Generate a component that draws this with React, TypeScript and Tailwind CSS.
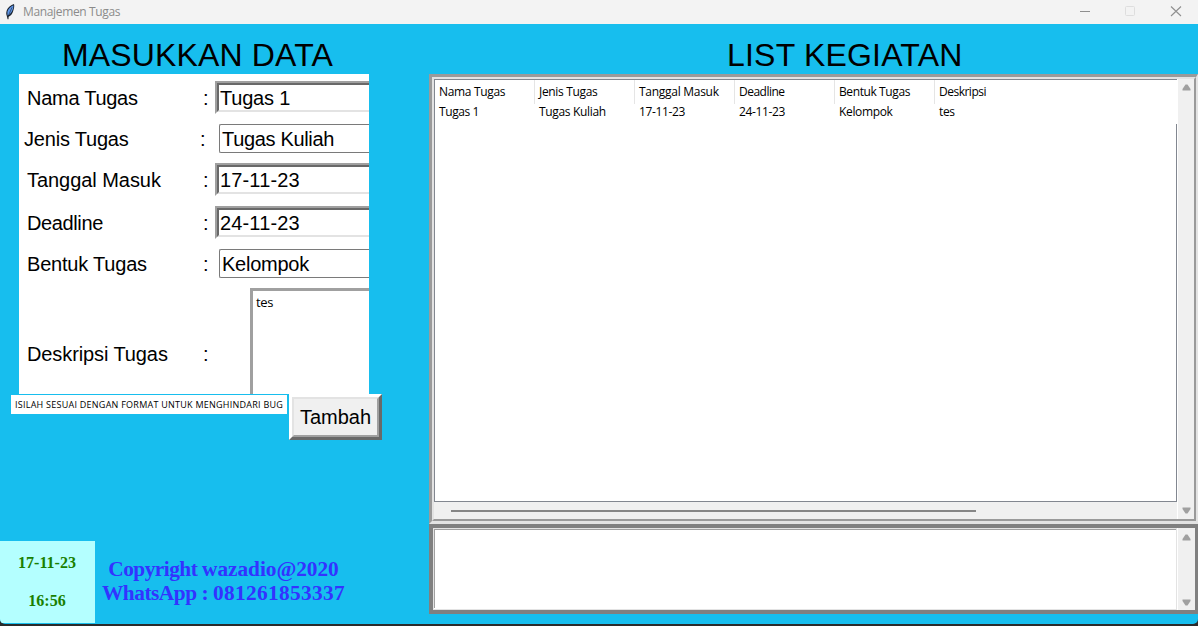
import type { ReactNode } from "react";

const columns = [
  { title: "Nama Tugas", value: "Tugas 1", titleCls: "tracking-[-0.33px]", valueCls: "tracking-[-0.4px]" },
  { title: "Jenis Tugas", value: "Tugas Kuliah", titleCls: "tracking-[-0.33px]", valueCls: "tracking-[-0.33px]" },
  { title: "Tanggal Masuk", value: "17-11-23", titleCls: "tracking-[-0.28px]", valueCls: "tracking-[-0.35px]" },
  { title: "Deadline", value: "24-11-23", titleCls: "tracking-[-0.5px]", valueCls: "tracking-[-0.35px]" },
  { title: "Bentuk Tugas", value: "Kelompok", titleCls: "tracking-[-0.4px]", valueCls: "tracking-[-0.35px]" },
  { title: "Deskripsi", value: "tes", titleCls: "tracking-[-0.5px]", valueCls: "tracking-[-0.35px]" },
];

function TitleBar() {
  return (
    <header className="flex h-6 shrink-0 items-center bg-[#f3f3f3]">
      <svg className="ml-[4px] h-4 w-[13px]" viewBox="0 0 13 16">
        <path d="M10 0 C7 0.8 3.6 3.6 2.6 7 C2 9 2.2 10.5 2.8 12 L3.6 15.3 L4.5 15.3 L4.6 12.8 C7 11.8 8.6 9.4 9.2 7 C10 4.8 10.6 2 10 0Z" fill="#1b2430" />
        <path d="M9.3 1.2 C6.4 2.4 4.1 5 3.4 7.8 L3.5 11.4 C6.6 10.4 7.8 7.8 8.5 6 C9.2 4.4 9.5 3 9.3 1.2Z" fill="#5f97ea" />
        <path d="M8 3.4 L4 12.5" stroke="#1b2430" strokeWidth="0.6" />
      </svg>
      <span className="ml-[6px] flex-1 text-[12px] leading-4 tracking-[-0.35px] text-[#8b8b8b]">Manajemen Tugas</span>
      <svg className="h-6 w-[120px]" viewBox="0 0 120 24" fill="none">
        <path d="M2 11.5H12" stroke="#8f8f8f" />
        <rect x="47.5" y="6.5" width="9" height="9" rx="1" stroke="#dedede" />
        <path d="M93 6.5L103 16M103 6.5L93 16" stroke="#8f8f8f" strokeWidth="1.1" />
      </svg>
    </header>
  );
}

interface FieldProps {
  label: string;
  height: string;
  labelCls: string;
  indent?: string;
  colon?: string;
  children: ReactNode;
}

function Field({ label, height, labelCls, indent = "pl-2", colon = "w-[12px]", children }: FieldProps) {
  return (
    <div className={`flex items-center ${height} ${indent}`}>
      <span className={`w-[176px] shrink-0 ${labelCls}`}>{label}</span>
      <span className={`shrink-0 ${colon}`}>:</span>
      {children}
    </div>
  );
}

function Entry({ children }: { children: ReactNode }) {
  return (
    <div className="mb-px h-[33px] flex-1 border-t-2 border-b-2 border-l-2 border-t-[#a0a0a0] border-b-white border-l-[#a0a0a0]">
      <div className="flex h-[29px] items-center border-t-2 border-b-2 border-l-2 border-t-[#696969] border-b-[#e3e3e3] border-l-[#696969] pl-px">
        {children}
      </div>
    </div>
  );
}

function Combo({ children }: { children: ReactNode }) {
  return (
    <div className="mb-px flex h-[29px] flex-1 items-center rounded-l-[2px] border border-r-0 border-[#7a7a7a] pl-[2px]">{children}</div>
  );
}

function Arrow({ down }: { down?: boolean }) {
  return (
    <svg className="h-[7px] w-[9px]" viewBox="0 0 9 7">
      <path d={down ? "M0.5 0.5H8.5V2L5.5 6.5H3.5L0.5 2Z" : "M0.5 6.5H8.5V5L5.5 0.5H3.5L0.5 5Z"} fill="#a0a0a0" />
    </svg>
  );
}

function TaskForm() {
  return (
    <section className="flex w-[429px] shrink-0 flex-col">
      <h1 className="h-[50px] pl-[62px] pt-[11px] text-[32px] leading-[40px] tracking-[0.15px]">MASUKKAN DATA</h1>
      <div className="ml-[19px] h-[320px] w-[350px] overflow-hidden bg-white text-[20px] leading-6">
        <Field label="Nama Tugas" height="h-[48px]" labelCls="tracking-[-0.27px]">
          <Entry><span className="tracking-[-0.2px]">Tugas 1</span></Entry>
        </Field>
        <Field label="Jenis Tugas" height="h-[34px]" labelCls="tracking-[-0.2px]" indent="pl-[5px]" colon="w-[19px]">
          <Combo><span className="tracking-[-0.33px]">Tugas Kuliah</span></Combo>
        </Field>
        <Field label="Tanggal Masuk" height="h-[48px]" labelCls="tracking-[-0.05px]">
          <Entry><span className="tracking-[0.15px]">17-11-23</span></Entry>
        </Field>
        <Field label="Deadline" height="h-[38px]" labelCls="tracking-[-0.38px]">
          <Entry><span className="tracking-[0.15px]">24-11-23</span></Entry>
        </Field>
        <Field label="Bentuk Tugas" height="h-[44px]" labelCls="tracking-[-0.2px]" colon="w-[16px]">
          <Combo><span className="tracking-[-0.25px]">Kelompok</span></Combo>
        </Field>
        <div className="flex h-[108px] pl-2">
          <span className="w-[176px] shrink-0 pt-[56px] tracking-[-0.1px]">Deskripsi Tugas</span>
          <span className="w-[47px] shrink-0 pt-[56px]">:</span>
          <div className="mt-[2px] flex-1 border-t-[3px] border-l-[3px] border-[#a0a0a0] pl-[3px] pt-[3px] font-['Open_Sans',sans-serif] text-[13px] leading-4 tracking-[-0.3px]">
            tes
          </div>
        </div>
      </div>
      <div className="flex items-start pl-[11px]">
        <p className="mt-px h-[19px] w-[276px] bg-white pl-1 font-['Open_Sans',sans-serif] text-[9px] leading-[19px] font-medium tracking-[0.25px] whitespace-nowrap">
          ISILAH SESUAI DENGAN FORMAT UNTUK MENGHINDARI BUG
        </p>
        <button className="ml-[2px] h-[46px] w-[93px] border-[3px] border-t-white border-r-[#696969] border-b-[#696969] border-l-white bg-[#f0f0f0]">
          <span className="flex h-full items-center justify-center border-2 border-t-[#e3e3e3] border-r-[#a0a0a0] border-b-[#a0a0a0] border-l-[#e3e3e3] text-[20px] leading-6">
            Tambah
          </span>
        </button>
      </div>
      <footer className="mt-auto flex h-[83px] items-start font-['Liberation_Serif',serif] font-bold">
        <div className="h-[82px] w-[95px] bg-[#b4ffff] pr-px pt-[11px] text-center text-[16px] leading-[22px] text-[#1a8000]">
          <p>17-11-23</p>
          <p className="mt-4">16:56</p>
        </div>
        <div className="ml-[7px] w-[243px] pt-[16px] text-center text-[21.33px] leading-6 whitespace-nowrap text-[#3333ff]">
          <p>
            <span className="tracking-[-0.52px]">Copyright </span>
            <span className="tracking-[-0.05px]">wazadio@2020</span>
          </p>
          <p>
            <span className="tracking-[-0.48px]">WhatsApp : </span>
            <span className="tracking-[0.35px]">081261853337</span>
          </p>
        </div>
      </footer>
    </section>
  );
}

function TaskList() {
  return (
    <section className="flex flex-1 flex-col">
      <h1 className="h-[50px] pl-[298px] pt-[11px] text-[32px] leading-[40px] tracking-[0.2px]">LIST KEGIATAN</h1>
      <div className="h-[450px] border-t-[3px] border-r-[2px] border-b-[3px] border-l-[3px] border-t-[#9a9a9a] border-r-[#e3e3e3] border-b-[#e3e3e3] border-l-[#9a9a9a]">
        <div className="flex h-[444px] border-2 border-t-[#e3e3e3] border-r-[#9a9a9a] border-b-[#9a9a9a] border-l-[#e3e3e3] bg-[#f0f0f0]">
          <div className="flex w-[743px] flex-col">
            <div className="flex h-[423px] flex-col border border-r-0 border-[#828790] bg-white font-['Open_Sans',sans-serif] text-[12px]">
              <div className="flex h-[44px] shrink-0">
                {columns.map((c) => (
                  <div key={c.title} className="w-[100px] pl-1">
                    <div className={`h-6 leading-6 whitespace-nowrap ${c.title === "Deskripsi" ? "" : "border-r border-[#e5e5e5]"} ${c.titleCls}`}>{c.title}</div>
                    <div className={`h-5 leading-[16px] whitespace-nowrap ${c.valueCls}`}>{c.value}</div>
                  </div>
                ))}
              </div>
              <div className="flex-1 border-r border-[#828790]" />
            </div>
            <div className="mt-px flex flex-1 items-center pl-[17px]">
              <div className="h-[2px] w-[525px] bg-[#868686]" />
            </div>
          </div>
          <div className="flex flex-1 flex-col items-center justify-between border-l border-white pt-[5px] pb-[5px]">
            <Arrow />
            <Arrow down />
          </div>
        </div>
      </div>
      <div className="flex h-[90px] border-4 border-r-[3px] border-[#808080] bg-[#f0f0f0]">
        <div className="h-[82px] w-[744px] border border-[#e3e3e3] bg-white">
          <div className="h-[79px] border-t border-l border-[#a0a0a0]" />
        </div>
        <div className="flex flex-1 flex-col items-center justify-between border-l border-white pt-[6px] pb-[4px]">
          <Arrow />
          <Arrow down />
        </div>
      </div>
    </section>
  );
}

export default function App() {
  return (
    <div className="flex h-[626px] w-[1198px] flex-col overflow-hidden bg-[#2b2b2b] font-['Open_Sans',sans-serif]">
      <TitleBar />
      <main className="flex h-[600px] overflow-hidden rounded-b-[5px] bg-[#17beee] font-['Liberation_Sans',sans-serif] text-black">
        <TaskForm />
        <TaskList />
      </main>
    </div>
  );
}
